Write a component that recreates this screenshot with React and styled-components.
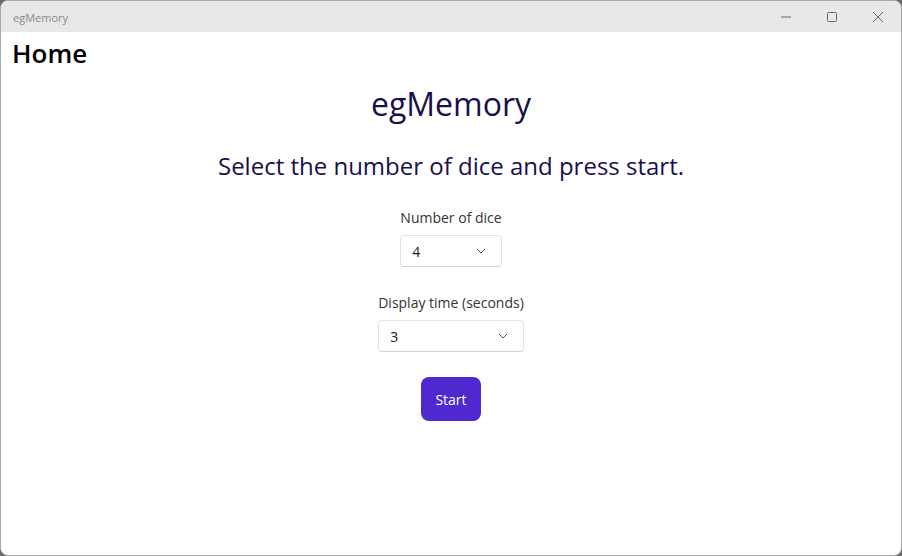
import styled, { createGlobalStyle } from "styled-components";

const GlobalStyle = createGlobalStyle`
  html, body {
    margin: 0;
    padding: 0;
    background: #6b6b6b;
  }
  #root {
    width: 902px;
    height: 556px;
  }
`;

export default function App() {
  return (
    <>
      <GlobalStyle />
      <WindowFrame>
        <TitleBar>
          <WindowTitle>egMemory</WindowTitle>
          <Controls>
            <ControlButton aria-label="Minimize">
              <svg width="10" height="10" viewBox="0 0 10 10">
                <path d="M0 5h10" stroke="#6b6b6b" strokeWidth="1" />
              </svg>
            </ControlButton>
            <ControlButton aria-label="Maximize">
              <svg width="10" height="10" viewBox="0 0 10 10">
                <rect x="0.5" y="0.5" width="9" height="9" rx="1" fill="none" stroke="#6b6b6b" strokeWidth="1" />
              </svg>
            </ControlButton>
            <ControlButton aria-label="Close">
              <svg width="10" height="10" viewBox="0 0 10 10">
                <path d="M0 0L10 10M10 0L0 10" stroke="#6b6b6b" strokeWidth="1" />
              </svg>
            </ControlButton>
          </Controls>
        </TitleBar>
        <Content>
          <PageTitle>Home</PageTitle>
          <Main>
            <AppName>egMemory</AppName>
            <Instructions>Select the number of dice and press start.</Instructions>
            <Field>
              <FieldLabel>Number of dice</FieldLabel>
              <Select>
                <span>4</span>
                <Chevron />
              </Select>
            </Field>
            <Field>
              <FieldLabel>Display time (seconds)</FieldLabel>
              <Select>
                <span>3</span>
                <Chevron />
              </Select>
            </Field>
            <StartButton>Start</StartButton>
          </Main>
        </Content>
      </WindowFrame>
    </>
  );
}

function Chevron() {
  return (
    <svg width="10" height="6" viewBox="0 0 10 6">
      <path d="M1 1l4 4 4-4" fill="none" stroke="#555" strokeWidth="1" />
    </svg>
  );
}

const WindowFrame = styled.div`
  width: 902px;
  height: 556px;
  box-sizing: border-box;
  border: 1px solid #a9a9a9;
  border-radius: 8px;
  overflow: hidden;
  background: #ffffff;
  display: flex;
  flex-direction: column;
  font-family: "Open Sans", "Noto Sans", sans-serif;
`;

const TitleBar = styled.div`
  height: 31px;
  flex-shrink: 0;
  background: #e8e8e8;
  display: flex;
  align-items: center;
  justify-content: space-between;
  padding-left: 12px;
`;

const WindowTitle = styled.span`
  font-size: 11px;
  color: #8a8a8a;
  padding-top: 1px;
`;

const Controls = styled.div`
  display: flex;
  height: 100%;
`;

const ControlButton = styled.div`
  width: 46px;
  height: 100%;
  display: flex;
  align-items: center;
  justify-content: center;
`;

const Content = styled.div`
  flex: 1;
  display: flex;
  flex-direction: column;
`;

const PageTitle = styled.h1`
  margin: 0;
  padding: 3px 0 0 11px;
  font-size: 26px;
  font-weight: 600;
  line-height: 36px;
  color: #000000;
`;

const Main = styled.div`
  display: flex;
  flex-direction: column;
  align-items: center;
`;

const AppName = styled.h2`
  margin: 0;
  margin-top: 11px;
  font-size: 32px;
  font-weight: 400;
  line-height: 44px;
  color: #1a0f4d;
`;

const Instructions = styled.p`
  margin: 0;
  margin-top: 23px;
  font-size: 24px;
  line-height: 34px;
  color: #1a0f4d;
`;

const Field = styled.div`
  display: inline-flex;
  flex-direction: column;
  align-items: stretch;
  margin-top: 25px;
  & + & {
    margin-top: 26px;
  }
`;

const FieldLabel = styled.label`
  font-size: 14px;
  line-height: 20px;
  color: #333333;
  text-align: center;
  margin-bottom: 7px;
`;

const Select = styled.div`
  height: 32px;
  box-sizing: border-box;
  border: 1px solid #e3e3e3;
  border-bottom-color: #d0d0d0;
  border-radius: 4px;
  display: flex;
  align-items: center;
  justify-content: space-between;
  padding: 0 15px 0 11px;
  font-size: 14px;
  color: #222222;
`;

const StartButton = styled.button`
  margin-top: 25px;
  width: 60px;
  height: 44px;
  border: none;
  border-radius: 8px;
  background: #5028d0;
  color: #ffffff;
  font-family: "Open Sans", "Noto Sans", sans-serif;
  font-size: 14px;
`;
